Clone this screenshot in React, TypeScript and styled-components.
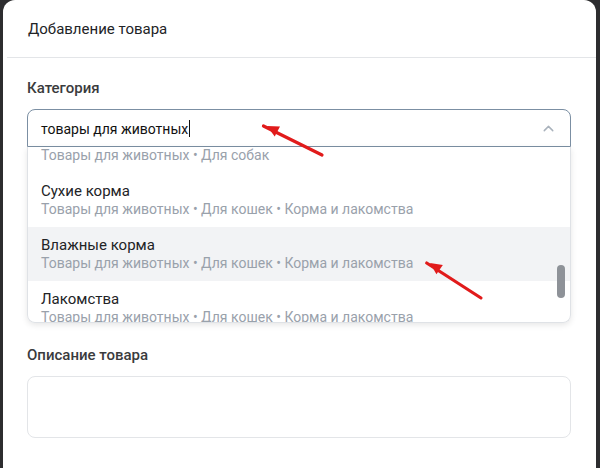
import { ChevronUp } from "lucide-react";
import styled, { createGlobalStyle } from "styled-components";

const TEXT_COLOR = "#222326";
const MUTED_COLOR = "#99a1ab";
const LINE_COLOR = "#e3e5e8";

const GlobalStyle = createGlobalStyle`
  html, body {
    margin: 0;
    padding: 0;
    background: #2d2d2f;
  }

  body {
    font-family: Roboto, "Noto Sans", sans-serif;
    -webkit-font-smoothing: antialiased;
  }
`;

const Backdrop = styled.div`
  position: relative;
  width: 600px;
  height: 468px;
  padding: 0 4px 0 3px;
  box-sizing: border-box;
  overflow: hidden;
  background: #2d2d2f;
`;

const Card = styled.div`
  height: 100%;
  background: #ffffff;
  border-radius: 12px 12px 0 0;
`;

const Header = styled.div`
  height: 58px;
  margin-left: 4px;
  padding-left: 21px;
  display: flex;
  align-items: center;
  border-bottom: 1px solid ${LINE_COLOR};
  box-sizing: border-box;
  font-size: 15px;
  color: ${TEXT_COLOR};
`;

const Body = styled.div`
  padding: 20px 25px 0 24px;
`;

const Label = styled.div<{ $gap?: number }>`
  margin-top: ${({ $gap }) => $gap ?? 0}px;
  font-size: 15px;
  font-weight: 500;
  line-height: 20px;
  color: #3a3b3d;
`;

const Combo = styled.div`
  margin-top: 11px;
`;

const InputBox = styled.div`
  height: 38px;
  padding: 0 13px 0 13px;
  display: flex;
  align-items: center;
  border: 1px solid #7b8fa3;
  border-radius: 8px 8px 0 0;
  box-sizing: border-box;
`;

const InputText = styled.span`
  flex: 1;
  font-size: 14px;
  color: #111;
`;

const Caret = styled.span`
  display: inline-block;
  width: 1px;
  height: 17px;
  margin-left: 1px;
  vertical-align: -3px;
  background: #111;
`;

const Dropdown = styled.div`
  position: relative;
  height: 176px;
  border: 1px solid #dfe2e6;
  border-top: none;
  border-radius: 0 0 8px 8px;
  box-shadow: 0 2px 6px rgba(0, 0, 0, 0.1);
  overflow: hidden;
  box-sizing: border-box;
`;

const OptionList = styled.div`
  margin-top: -28px;
`;

const Option = styled.div<{ $active?: boolean }>`
  height: 54px;
  padding: 9px 13px;
  box-sizing: border-box;
  background: ${({ $active }) => ($active ? "#f2f3f5" : "transparent")};
`;

const OptionTitle = styled.div`
  font-size: 15px;
  line-height: 18px;
  color: ${TEXT_COLOR};
`;

const OptionPath = styled.div`
  font-size: 14px;
  line-height: 18px;
  color: ${MUTED_COLOR};
`;

const ScrollThumb = styled.div`
  position: absolute;
  top: 118px;
  right: 5px;
  width: 8px;
  height: 33px;
  border-radius: 4px;
  background: #8e9298;
`;

const TextArea = styled.div`
  height: 60px;
  margin-top: 11px;
  border: 1px solid ${LINE_COLOR};
  border-radius: 8px;
`;

const Annotations = styled.svg`
  position: absolute;
  inset: 0;
  pointer-events: none;
`;

const options = [
  { title: "Амуниция", path: "Товары для животных • Для собак" },
  { title: "Сухие корма", path: "Товары для животных • Для кошек • Корма и лакомства" },
  { title: "Влажные корма", path: "Товары для животных • Для кошек • Корма и лакомства", active: true },
  { title: "Лакомства", path: "Товары для животных • Для кошек • Корма и лакомства" },
];

const Arrow = ({ x1, y1, x2, y2 }: { x1: number; y1: number; x2: number; y2: number }) => {
  const angle = Math.atan2(y2 - y1, x2 - x1);
  const len = 13;
  const spread = 0.45;
  const ax = x2 - len * Math.cos(angle - spread);
  const ay = y2 - len * Math.sin(angle - spread);
  const bx = x2 - len * Math.cos(angle + spread);
  const by = y2 - len * Math.sin(angle + spread);
  return (
    <g>
      <line x1={x1} y1={y1} x2={x2 + 4 * Math.cos(angle)} y2={y2} stroke="#e11b1b" strokeWidth={3.2} strokeLinecap="round" />
      <polygon points={`${x2},${y2} ${ax},${ay} ${bx},${by}`} fill="#e11b1b" />
    </g>
  );
};

const App = () => (
  <>
    <GlobalStyle />
    <Backdrop>
      <Card>
        <Header>Добавление товара</Header>
        <Body>
          <Label>Категория</Label>
          <Combo>
            <InputBox>
              <InputText>
                товары для животных
                <Caret />
              </InputText>
              <ChevronUp size={17} color="#a9b2bc" strokeWidth={2} />
            </InputBox>
            <Dropdown>
              <OptionList>
                {options.map((option) => (
                  <Option key={option.title} $active={option.active}>
                    <OptionTitle>{option.title}</OptionTitle>
                    <OptionPath>{option.path}</OptionPath>
                  </Option>
                ))}
              </OptionList>
              <ScrollThumb />
            </Dropdown>
          </Combo>
          <Label $gap={22}>Описание товара</Label>
          <TextArea />
        </Body>
      </Card>
      <Annotations width={600} height={468}>
        <Arrow x1={322} y1={155} x2={267} y2={126} />
        <Arrow x1={481} y1={298} x2={430} y2={263} />
      </Annotations>
    </Backdrop>
  </>
);

export default App;
